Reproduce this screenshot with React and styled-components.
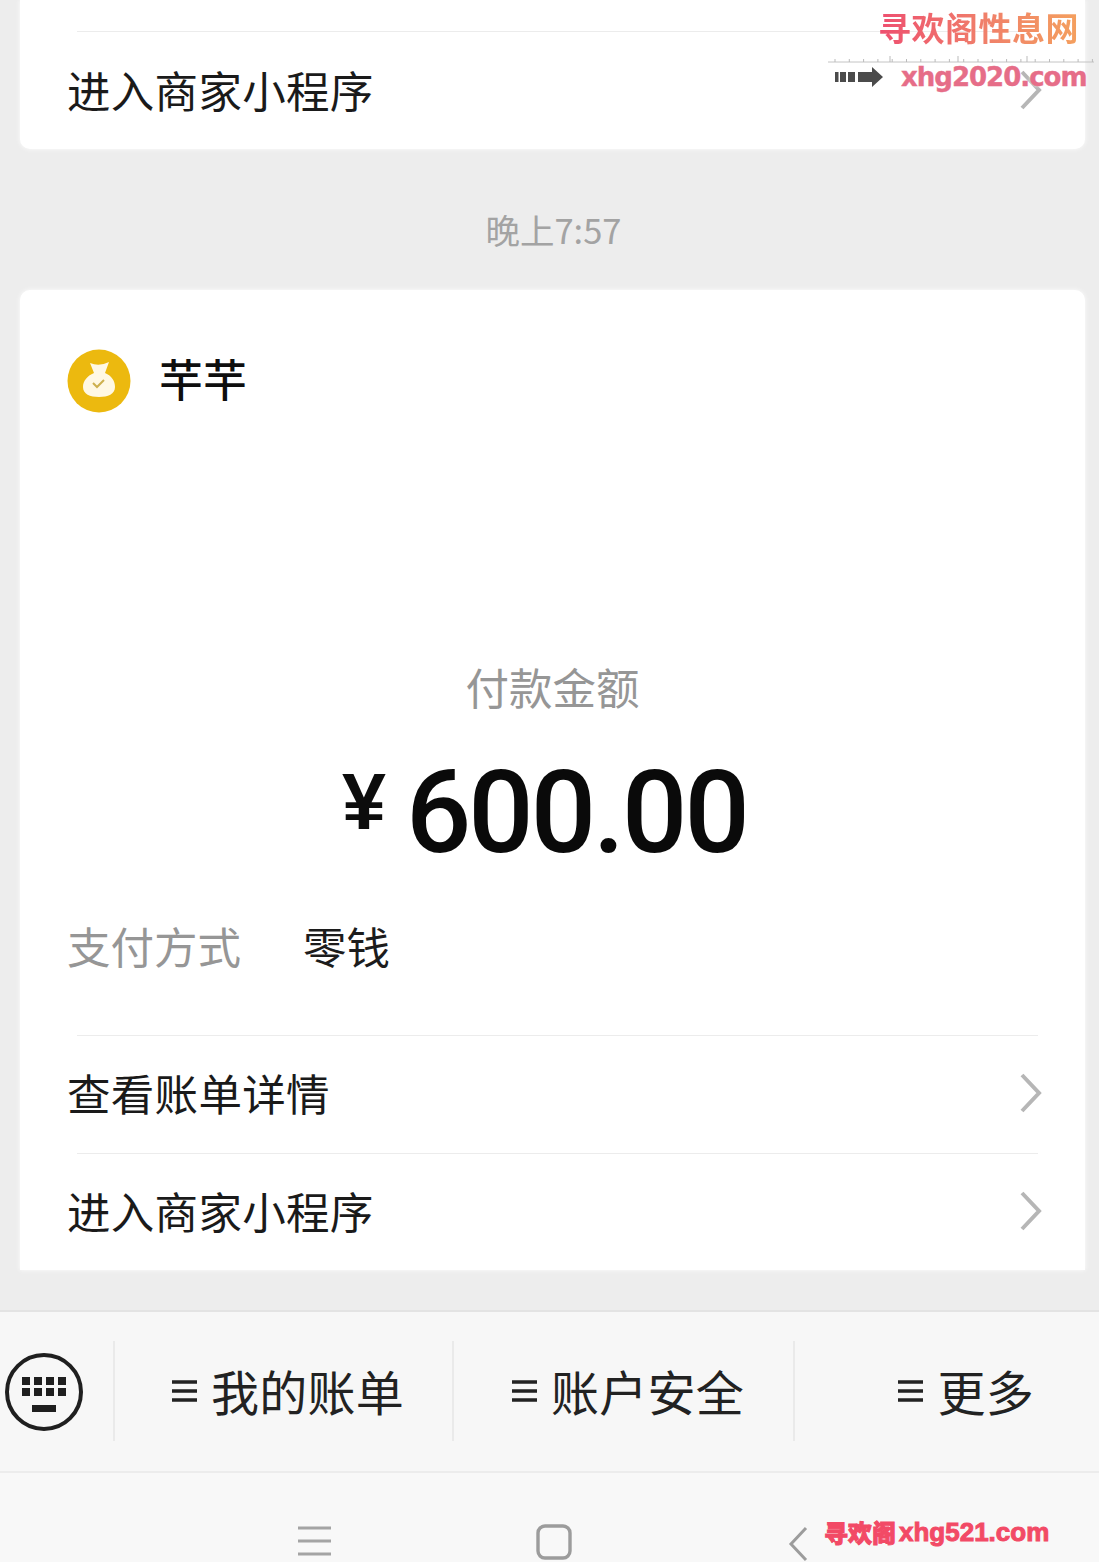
import React from "react";
import styled, { createGlobalStyle } from "styled-components";

const Global = createGlobalStyle`
  html, body { margin: 0; padding: 0; }
  body { background: #ededed; font-family: "Noto Sans CJK SC", "Noto Sans", sans-serif; }
`;

const Page = styled.div`
  position: relative;
  width: 1099px;
  height: 1562px;
  overflow: hidden;
  background: #ededed;
  display: flex;
  flex-direction: column;
`;

const Card = styled.section`
  width: 1065px;
  margin-left: 20px;
  background: #fff;
  border-radius: ${(p) => p.$radius};
  box-shadow: 0 0 5px rgba(255, 255, 255, 0.9);
`;

const TopCard = styled(Card)`
  height: 149px;
  padding-top: 31px;
  box-sizing: border-box;
`;

const PayCard = styled(Card)`
  height: 980px;
  padding-top: 60px;
  box-sizing: border-box;
`;

const TimeLabel = styled.div`
  height: 141px;
  box-sizing: border-box;
  padding: 20px 0 0 8px;
  display: flex;
  align-items: center;
  justify-content: center;
  font-size: 34.5px;
  color: #a3a3a3;
`;

const Merchant = styled.div`
  display: flex;
  align-items: center;
  gap: 28px;
  padding-left: 47px;
  height: 62px;
`;

const MerchantName = styled.div`
  font-size: 44px;
  font-weight: 500;
  line-height: 62px;
  color: #0e0e0e;
  margin-top: -6px;
`;

const AmountLabel = styled.div`
  margin-top: 245px;
  height: 60px;
  line-height: 60px;
  text-align: center;
  font-size: 43.5px;
  color: #969696;
`;

const Amount = styled.div`
  margin-top: 37px;
  height: 116px;
  display: flex;
  align-items: center;
  padding-left: 322px;
`;

const Yen = styled.span`
  font-family: "Liberation Sans", sans-serif;
  font-weight: 700;
  font-size: 79px;
  line-height: 116px;
  width: 64px;
  color: #0c0c0c;
  margin-top: -20px;
`;

const Figure = styled.span`
  font-family: Roboto, sans-serif;
  font-weight: 500;
  font-size: 115px;
  line-height: 116px;
  letter-spacing: -3px;
  color: #0a0a0a;
  margin-top: 2px;
`;

const Method = styled.div`
  display: flex;
  align-items: center;
  padding-left: 47px;
  margin-top: 45px;
  height: 62px;
`;

const MethodLabel = styled.span`
  width: 236px;
  font-size: 43.5px;
  color: #969696;
`;

const MethodValue = styled.span`
  font-size: 43.5px;
  color: #1c1c1c;
`;

const LinkRow = styled.div`
  margin-left: 57px;
  margin-right: 47px;
  height: 117px;
  border-top: 1px solid #ececec;
  display: flex;
  align-items: center;
  justify-content: space-between;
`;

const LinkText = styled.span`
  margin-left: -10px;
  margin-top: -3px;
  font-size: 43.5px;
  letter-spacing: 0.3px;
  color: #1a1a1a;
`;

const Links = styled.div`
  margin-top: 58px;
`;

const Chevron = styled.svg`
  width: 24px;
  height: 40px;
  margin-right: -5px;
  margin-top: -2px;
  flex: none;
`;

const Arrow = () => (
  <Chevron viewBox="0 0 24 40">
    <path d="M3 2 L20 20 L3 38" fill="none" stroke="#b6b6b6" strokeWidth="4" />
  </Chevron>
);

const MenuBar = styled.nav`
  margin-top: 40px;
  height: 164px;
  box-sizing: border-box;
  background: #f7f7f7;
  border-top: 2px solid #e3e3e3;
  border-bottom: 2px solid #ececec;
  display: grid;
  grid-template-columns: 113px 339px 341px 306px;
  align-items: center;
`;

const KeyCell = styled.div`
  height: 100%;
  display: flex;
  align-items: center;
  padding: 2px 0 0 5px;
  box-sizing: border-box;
`;

const MenuItem = styled.div`
  height: 100px;
  border-left: 2px solid #eaeaea;
  display: flex;
  align-items: center;
  justify-content: ${(p) => (p.$end ? "flex-end" : "center")};
  padding: ${(p) => (p.$end ? "0 65px 0 0" : "0 0 0 9px")};
  gap: 14px;
  font-size: 48px;
  letter-spacing: 0.3px;
  color: #222;
`;

const MenuLabel = styled.span`
  margin-top: -3px;
`;

const Burger = styled.svg`
  width: 25px;
  height: 24px;
  flex: none;
`;

const MenuIcon = () => (
  <Burger viewBox="0 0 25 24">
    <path d="M0 3H25M0 12H25M0 21H25" stroke="#222" strokeWidth="3.6" />
  </Burger>
);

const NavBar = styled.div`
  flex: 1;
  background: #f8f8f8;
`;

const NavIcons = styled.div`
  display: grid;
  grid-template-columns: 238px 252px 60px;
  padding-left: 298px;
`;

const NavSlot = styled.div`
  display: flex;
  padding-top: ${(p) => p.$top};
`;

const BagSvg = styled.svg`
  width: 64px;
  height: 64px;
  flex: none;
`;

const WatermarkTop = styled.div`
  position: absolute;
  top: 0;
  left: 828px;
  width: 266px;
`;

const WatermarkTitle = styled.div`
  margin-left: 50px;
  padding-top: 6px;
  height: 44px;
  font-size: 33px;
  line-height: 42px;
  font-weight: 700;
  white-space: nowrap;
  letter-spacing: 0.5px;
  background: linear-gradient(90deg, #ee4f70 0%, #f0806a 50%, #f5a55c 100%);
  -webkit-background-clip: text;
  background-clip: text;
  color: transparent;
`;

const Ruler = styled.svg`
  display: block;
  width: 266px;
  height: 16px;
`;

const WatermarkUrl = styled.div`
  display: flex;
  align-items: center;
  gap: 17px;
  margin-left: 6px;
  margin-top: -4px;
`;

const UrlText = styled.span`
  font-family: "DejaVu Sans", sans-serif;
  font-weight: 700;
  font-size: 26px;
  line-height: 30px;
  letter-spacing: -1px;
  color: #e66d88;
  -webkit-text-stroke: 0.4px #e66d88;
  text-shadow: 0 0 3px #fff;
`;

const WatermarkBottom = styled.div`
  position: absolute;
  left: 824px;
  top: 1516px;
  height: 32px;
  line-height: 32px;
  display: flex;
  gap: 3px;
  font-weight: 900;
  white-space: nowrap;
  color: #f24a66;
  -webkit-text-stroke: 1px #f24a66;
  text-shadow: 0 0 2px #fff;
`;

const BottomCn = styled.span`
  font-size: 24px;
`;

const BottomUrl = styled.span`
  font-family: "Liberation Sans", sans-serif;
  font-size: 26px;
`;

const ticks = Array.from({ length: 19 }, (_, i) => 7 + i * 14.3);
const bigTicks = [62, 130, 199];

export default function App() {
  return (
    <Page>
      <Global />
      <TopCard $radius="0 0 10px 10px">
        <LinkRow>
          <LinkText>进入商家小程序</LinkText>
          <Arrow />
        </LinkRow>
      </TopCard>
      <TimeLabel>晚上7:57</TimeLabel>
      <PayCard $radius="10px 10px 0 0">
        <Merchant>
          <BagSvg viewBox="0 0 64 64">
            <circle cx="32" cy="32" r="31.5" fill="#ecb90f" />
            <path d="M23 14 Q32 18 42 13 L38 24 C45 27 48 32 48 38 C48 45 41 48 32 48 C23 48 16 45 16 38 C16 32 20 27 27 24 Z" fill="#fff8e4" />
            <path d="M26 34 L30 38 L37 31" fill="none" stroke="#cdb04e" strokeWidth="2" />
          </BagSvg>
          <MerchantName>芉芉</MerchantName>
        </Merchant>
        <AmountLabel>付款金额</AmountLabel>
        <Amount>
          <Yen>¥</Yen>
          <Figure>600.00</Figure>
        </Amount>
        <Method>
          <MethodLabel>支付方式</MethodLabel>
          <MethodValue>零钱</MethodValue>
        </Method>
        <Links>
          <LinkRow>
            <LinkText>查看账单详情</LinkText>
            <Arrow />
          </LinkRow>
          <LinkRow>
            <LinkText>进入商家小程序</LinkText>
            <Arrow />
          </LinkRow>
        </Links>
      </PayCard>
      <MenuBar>
        <KeyCell>
          <svg width="78" height="78" viewBox="0 0 78 78">
            <circle cx="39" cy="39" r="37" fill="none" stroke="#1f1f1f" strokeWidth="4" />
            <path d="M17 24h8v8h-8zM29 24h8v8h-8zM41 24h8v8h-8zM53 24h8v8h-8zM17 35h8v8h-8zM29 35h8v8h-8zM41 35h8v8h-8zM53 35h8v8h-8zM27 52h24v7h-24z" fill="#1f1f1f" />
          </svg>
        </KeyCell>
        <MenuItem><MenuIcon /><MenuLabel>我的账单</MenuLabel></MenuItem>
        <MenuItem><MenuIcon /><MenuLabel>账户安全</MenuLabel></MenuItem>
        <MenuItem $end><MenuIcon /><MenuLabel>更多</MenuLabel></MenuItem>
      </MenuBar>
      <NavBar>
        <NavIcons>
          <NavSlot $top="52px">
            <svg width="33" height="32" viewBox="0 0 33 32">
              <path d="M0 3H33M0 16H33M0 29H33" stroke="#a4a4a4" strokeWidth="3" />
            </svg>
          </NavSlot>
          <NavSlot $top="51px">
            <svg width="36" height="36" viewBox="0 0 36 36">
              <rect x="2" y="2" width="32" height="32" rx="7" fill="none" stroke="#9c9c9c" strokeWidth="3.4" />
            </svg>
          </NavSlot>
          <NavSlot $top="53px">
            <svg width="20" height="36" viewBox="0 0 20 36">
              <path d="M18 2 L3 18 L18 34" fill="none" stroke="#9c9c9c" strokeWidth="3" />
            </svg>
          </NavSlot>
        </NavIcons>
      </NavBar>
      <WatermarkTop>
        <WatermarkTitle>寻欢阁性息网</WatermarkTitle>
        <Ruler viewBox="0 0 266 16">
          <path d="M0 12H266" stroke="#c4c4c4" strokeWidth="1" />
          {ticks.map((x) => <path key={x} d={`M${x} 9V12`} stroke="#bbb" strokeWidth="1" />)}
          {bigTicks.map((x) => <path key={x} d={`M${x} 6V12`} stroke="#bbb" strokeWidth="1" />)}
        </Ruler>
        <WatermarkUrl>
          <svg width="50" height="22" viewBox="0 0 50 22">
            <path d="M1 6h3.5v10h-3.5zM6 6h6v10h-6zM14 6h7v10h-7zM24 6h14v-5l11 10l-11 10v-5h-14z" fill="#4b4b4b" />
          </svg>
          <UrlText>xhg2020.com</UrlText>
        </WatermarkUrl>
      </WatermarkTop>
      <WatermarkBottom>
        <BottomCn>寻欢阁</BottomCn>
        <BottomUrl>xhg521.com</BottomUrl>
      </WatermarkBottom>
    </Page>
  );
}
